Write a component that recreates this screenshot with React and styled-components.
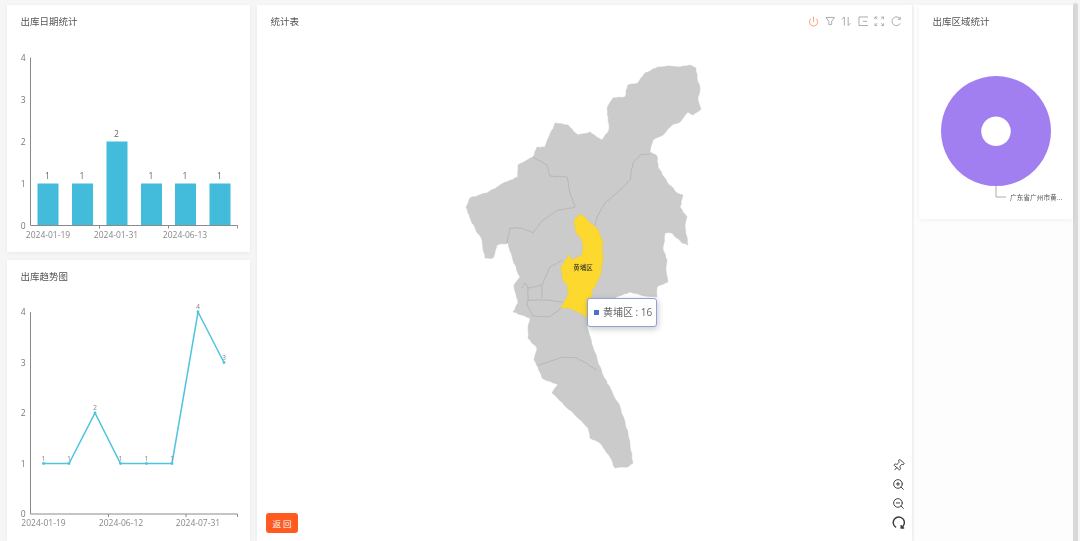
import React from 'react';
import styled, { createGlobalStyle } from 'styled-components';
import { Power, Pin, ZoomIn, ZoomOut } from 'lucide-react';

const Global = createGlobalStyle`
  html, body { margin: 0; padding: 0; height: 541px; overflow: hidden; background: #f6f6f6; }
  body { font-family: "Open Sans", "Noto Sans CJK SC", sans-serif; }
`;

const Page = styled.div`
  width: 1080px; height: 541px; display: flex; box-sizing: border-box; padding: 5px 0 0 7px; overflow: hidden;
  filter: blur(0.35px);
`;
const LeftColumn = styled.div`
  width: 243px; display: flex; flex-direction: column; gap: 8px; flex: none; margin-right: 7px;
`;
const RightColumn = styled.div`
  width: 159px; flex: none; box-sizing: border-box; padding: 0 2px 0 5px; margin-left: 2px; background: #fdfdfd;
`;
const Card = styled.section`
  background: #fff; box-sizing: border-box; position: relative; display: flex; flex-direction: column;
  width: ${p => p.$w || 'auto'}; height: ${p => p.$h}; flex: none; box-shadow: 0 1px 4px rgba(0,0,0,.06);
`;
const Title = styled.h3`
  margin: 0; padding: 9px 0 0 13.5px; font: 400 9.5px/14px "Noto Sans CJK SC", sans-serif; color: #555;
`;
const ChartSvg = styled.svg`
  position: absolute; left: 0; top: 0; display: block;
  text { font-family: "Open Sans", sans-serif; }
`;
const Toolbar = styled.div`
  position: absolute; right: 11px; top: 11px; display: flex; gap: 6px; align-items: center;
`;
const ToolIcon = styled.span`
  display: flex; color: ${p => p.$on ? '#ff8450' : '#a8a8a8'};
`;
const MapSvg = styled.svg`
  position: absolute; left: 0; top: 0;
`;
const Tooltip = styled.div`
  position: absolute; left: 330px; top: 292.5px; width: 70px; height: 29px; box-sizing: border-box;
  background: #fff; border: 1px solid #8ea2d8; border-radius: 3px; box-shadow: 1px 2px 6px rgba(0,0,0,.22);
  display: flex; align-items: center; gap: 4px; padding-left: 6px;
  font: 400 10px/14px "Open Sans", "Noto Sans CJK SC", sans-serif; color: #666; white-space: pre;
`;
const Swatch = styled.i`
  width: 5px; height: 5px; background: #4f6fc9; flex: none;
`;
const ZoomBar = styled.div`
  position: absolute; left: 635px; top: 454px; display: flex; flex-direction: column; gap: 6px; color: #3c3c3c;
`;
const BackButton = styled.button`
  position: absolute; left: 9px; top: 508px; width: 32px; height: 20px; border: 0; border-radius: 3px; padding: 0;
  background: #ff5a1f; color: #fff; font: 400 8.5px/20px "Noto Sans CJK SC", sans-serif; white-space: pre;
`;
const Scrollbar = styled.div`
  flex: none; margin-top: -2px; width: 5px; height: 538px; background: #d9d9d9; border-radius: 3px 3px 0 0;
`;

// Deterministic roughening: turns the traced polygons into the jagged borders of a district map.
function rough(d, amp = 0.55, step = 3) {
  const closed = /Z\s*$/.test(d);
  const nums = d.match(/-?[\d.]+/g).map(Number);
  const pts = [];
  for (let i = 0; i < nums.length; i += 2) pts.push([nums[i], nums[i + 1]]);
  if (closed) pts.push(pts[0]);
  let out = `M${pts[0][0]} ${pts[0][1]}`;
  let seed = 7;
  const rnd = () => { seed = (seed * 16807) % 2147483647; return (seed % 1000) / 500 - 1; };
  for (let i = 1; i < pts.length; i++) {
    const [x0, y0] = pts[i - 1];
    const [x1, y1] = pts[i];
    const len = Math.hypot(x1 - x0, y1 - y0);
    const n = Math.max(1, Math.round(len / step));
    const nx = -(y1 - y0) / (len || 1);
    const ny = (x1 - x0) / (len || 1);
    for (let k = 1; k <= n; k++) {
      const t = k / n;
      const j = k === n ? 0 : rnd() * amp;
      out += `L${(x0 + (x1 - x0) * t + nx * j).toFixed(2)} ${(y0 + (y1 - y0) * t + ny * j).toFixed(2)}`;
    }
  }
  return out + (closed ? 'Z' : '');
}

const outline = rough("M658 67 L670 66 L680 67 L690 65 L696 68 L697 78 L700 88 L698 100 L701 109 L693 115 L688 112 L680 122 L672 125 L663 135 L653 140 L650 152 L657 156 L658 167 L667 182 L677 193 L683 195 L680 207 L687 217 L685 227 L688 245 L682 243 L672 233 L665 233 L663 250 L667 260 L666 270 L668 282 L657 287 L657 297 L645 296 L630 292 L622 295 L610 300 L590 310 L587 327 L593 347 L602 373 L620 407 L628 433 L633 463 L628 467 L615 468 L610 457 L600 443 L590 438 L588 428 L577 417 L552 393 L558 385 L542 378 L538 367 L534 360 L537 348 L528 338 L528 327 L530 318 L513 312 L518 303 L514 285 L520 277 L513 260 L508 243 L497 245 L493 258 L485 258 L482 240 L472 223 L466 207 L470 198 L487 193 L500 185 L518 177 L518 165 L533 157 L537 147 L545 147 L555 123 L568 125 L578 135 L590 132 L602 140 L609 130 L607 108 L613 98 L625 97 L628 85 L638 83 L645 73 Z");
const borders = [
  "M650 154 L640 155 L633 163 L630 180 L617 193 L605 203 L597 217 L595 225",
  "M533 157 L547 165 L550 176 L567 177 L570 193 L575 207 L572 208 L558 210 L543 220 L533 233 L522 228 L510 228 L507 243",
  "M563 260 L550 267 L542 285 L528 288 L525 283 L522 288",
  "M542 285 L542 298",
  "M528 288 L528 300 L527 305 L533 316 L550 317 L561 308",
  "M528 300 L547 300 L563 302",
  "M538 365 L548 362 L563 357 L577 358 L597 370",
].map(d => rough(d, 0.45));
const yellow = rough("M574 220 L580 214 L585 217 L590 223 L597 228 L601 237 L602 242 L604 242 L602 246 L603 258 L601 273 L595 287 L592 290 L592 297 L587 298 L587 318 L580 313 L568 308 L561 308 L568 295 L568 287 L563 280 L561 268 L565 260 L568 258 L567 255 L569 255 L572 260 L582 255 L583 248 L582 240 L576 233 L575 228 Z", 0.3);

const barValues = [1, 1, 2, 1, 1, 1];
const bx = [37.5, 72, 106.5, 141, 175, 209.5];
const lineX = [43.5, 69, 95, 120.5, 146.5, 172, 198, 224];
const lineVal = [1, 1, 2, 1, 1, 1, 4, 3];

function Axis({ x0, x1, y0, y4, labels, ticks }) {
  const step = (y0 - y4) / 4;
  return (
    <g>
      <path d={`M${x0} ${y4}V${y0}H${x1}V${y0 + 3}`} fill="none" stroke="#8a8a8a" strokeWidth="1" />
      {ticks.map(t => <path key={t} d={`M${t} ${y0}V${y0 + 3}`} stroke="#8a8a8a" />)}
      {[0, 1, 2, 3, 4].map(v => (
        <text key={v} x={x0 - 5} y={y0 - v * step + 3} fontSize="8.5" fill="#777" textAnchor="end">{v}</text>
      ))}
      {labels.map(([t, x]) => <text key={t} x={x} y={y0 + 12} fontSize="8.5" fill="#888" textAnchor="middle">{t}</text>)}
    </g>
  );
}

function BarChart() {
  return (
    <ChartSvg width="243" height="247" viewBox="7 5 243 247">
      {barValues.map((v, i) => (
        <g key={i}>
          <rect x={bx[i]} y={225.5 - v * 42} width="21" height={v * 42} fill="#43bbdb" />
          <text x={bx[i] + 10} y={225.5 - v * 42 - 5} fontSize="8.5" fill="#666" textAnchor="middle">{v}</text>
        </g>
      ))}
      <Axis x0={30.5} x1={237.5} y0={225.5} y4={57.5} ticks={[99.5, 168.5]}
        labels={[['2024-01-19', 48], ['2024-01-31', 116], ['2024-06-13', 185]]} />
    </ChartSvg>
  );
}

function LineChart() {
  const y = v => 514 - v * 50.5;
  const pts = lineX.map((x, i) => `${x},${y(lineVal[i])}`).join(' ');
  return (
    <ChartSvg width="243" height="281" viewBox="7 260 243 281">
      <polyline points={pts} fill="none" stroke="#4fc3df" strokeWidth="1.5" />
      {lineX.map((x, i) => (
        <g key={i}>
          <circle cx={x} cy={y(lineVal[i])} r="1.4" fill="#4fc3df" />
          <text x={x} y={y(lineVal[i]) - 3} fontSize="7" fill="#888" textAnchor="middle">{lineVal[i]}</text>
        </g>
      ))}
      <Axis x0={30.5} x1={237.5} y0={514} y4={312} ticks={[108.5, 186]}
        labels={[['2024-01-19', 43.5], ['2024-06-12', 121], ['2024-07-31', 198]]} />
    </ChartSvg>
  );
}

function GuangzhouMap() {
  return (
    <MapSvg width="655" height="536" viewBox="257 5 655 536">
      <path d={outline} fill="#cbcbcb" stroke="#c6c6c6" strokeWidth=".5" strokeLinejoin="round" />
      {borders.map(d => <path key={d} d={d} fill="none" stroke="#aeaeae" strokeWidth=".7" strokeLinejoin="round" />)}
      <path d={yellow} fill="#fdd92f" stroke="#e8cd3c" strokeWidth=".5" strokeLinejoin="round" />
      <text x="583" y="270" fontSize="6.5" fill="#222" textAnchor="middle" style={{ fontFamily: '"Noto Sans CJK SC", sans-serif' }}>黄埔区</text>
    </MapSvg>
  );
}

function RegionPie() {
  return (
    <ChartSvg width="154" height="214" viewBox="919 5 154 214">
      <path fillRule="evenodd" fill="#a17ff0" d="M996 76a55 55 0 1 0 .01 0Z M996 116.500a14.800 14.800 0 1 1 -.01 0Z" />
      <path d="M996 186V197H1006" fill="none" stroke="#999" strokeWidth=".8" />
      <text x="1010" y="200" fontSize="6.700" fill="#555" style={{ fontFamily: '"Noto Sans CJK SC", sans-serif' }}>广东省广州市黄...</text>
    </ChartSvg>
  );
}

const Glyph = ({ d, size = 10.5, sw = 1 }) => (
  <svg width={size} height={size} viewBox="0 0 11 11" fill="none" stroke="currentColor" strokeWidth={sw}>
    <path d={d} />
  </svg>
);

export default function App() {
  return (
    <Page>
      <Global />
      <LeftColumn>
        <Card $h="247px">
          <Title>出库日期统计</Title>
          <BarChart />
        </Card>
        <Card $h="281px">
          <Title>出库趋势图</Title>
          <LineChart />
        </Card>
      </LeftColumn>
      <Card $w="655px" $h="536px">
        <GuangzhouMap />
        <Title>统计表</Title>
        <Toolbar>
          <ToolIcon $on><Power size={11} strokeWidth={1.7} /></ToolIcon>
          <ToolIcon><Glyph d="M1 1.500H10L7 5.500V9H4V5.500Z" /></ToolIcon>
          <ToolIcon><Glyph d="M3.500 10V1L1 3.500M7.500 1V10L10 7.500" /></ToolIcon>
          <ToolIcon><Glyph d="M10.500 1H1V10H10.500M5 5.500H9.500" /></ToolIcon>
          <ToolIcon><Glyph d="M1 3.500V1H3.500M1 1L3.500 3.500M10 3.500V1H7.500M10 1L7.500 3.500M1 7.500V10H3.500M1 10L3.500 7.500M10 7.500V10H7.500M10 10L7.500 7.500" sw=".9" /></ToolIcon>
          <ToolIcon><Glyph d="M9.700 3.300A4.600 4.600 0 1 0 9.700 7.700M9.700 1V3.500H7.200" /></ToolIcon>
        </Toolbar>
        <Tooltip><Swatch />黄埔区 : 16</Tooltip>
        <ZoomBar>
          <Pin size={13} strokeWidth={1.6} style={{ transform: 'rotate(40deg)' }} />
          <ZoomIn size={13} strokeWidth={1.8} />
          <ZoomOut size={13} strokeWidth={1.8} />
          <Glyph size={13} sw={1.2} d="M3.500 9.700A4.700 4.700 0 1 1 7.800 9.800M7.800 7.600V10.200H10.300" />
        </ZoomBar>
        <BackButton>返 回</BackButton>
      </Card>
      <RightColumn>
        <Card $w="154px" $h="214px">
          <Title>出库区域统计</Title>
          <RegionPie />
        </Card>
      </RightColumn>
      <Scrollbar />
    </Page>
  );
}
